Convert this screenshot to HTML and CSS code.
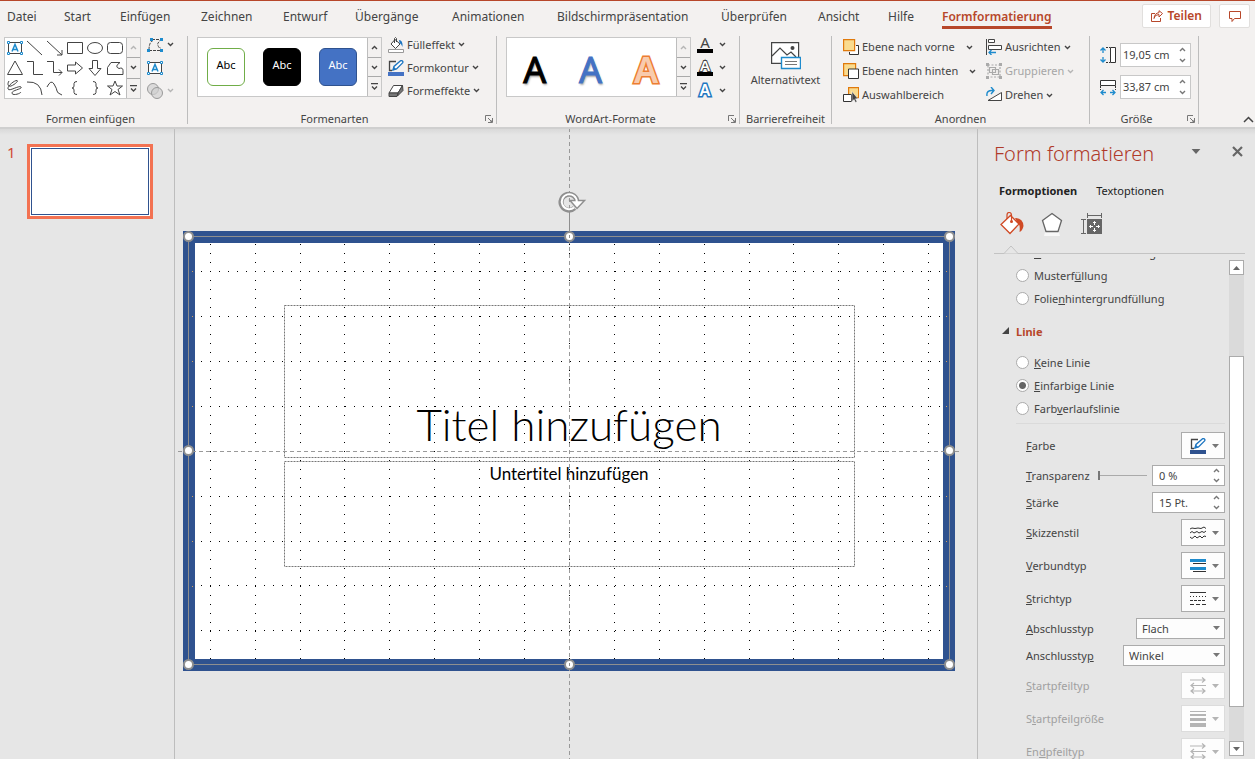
FILE: index.html
```html
<!DOCTYPE html>
<html lang="de">
<head>
<meta charset="utf-8">
<title>Formformatierung</title>
<link rel="stylesheet" href="styles.css">
</head>
<body>
<svg class="defs" aria-hidden="true">
  <symbol id="chev" viewBox="0 0 7 7"><path d="M1 2l2.5 2.5L6 2" fill="none" stroke="currentColor" stroke-width="1.4"/></symbol>
  <symbol id="chev-up" viewBox="0 0 7 7"><path d="M1 5l2.5-2.5L6 5" fill="none" stroke="currentColor" stroke-width="1.4"/></symbol>
  <symbol id="more" viewBox="0 0 7 7"><path d="M0 .5h7M1 3.5L3.500 6 6 3.500" fill="none" stroke="currentColor" stroke-width="1.3"/></symbol>
  <symbol id="tri" viewBox="0 0 7 4"><path d="M0 0h7L3.500 4z" fill="currentColor"/></symbol>
  <symbol id="launch" viewBox="0 0 8 8"><path d="M.5 6V.5H6M3 3l3.500 3.500M7.500 3v4.500H3" fill="none" stroke="#777"/><path d="M7 5v2H5z" fill="#777"/></symbol>
  <symbol id="textbox" viewBox="0 0 16 14"><path d="M1.500 1.500h13v11h-13z" fill="#fff" stroke="#444"/><path d="M5 10.500L8 3.500l3 7M6 8.500h4" fill="none" stroke="#1e8bcd" stroke-width="1.500"/><path d="M.5.5h2v2h-2zM13.500.5h2v2h-2zM.5 11.500h2v2h-2zM13.500 11.500h2v2h-2z" fill="#fff" stroke="#1e8bcd"/></symbol>
  <symbol id="pen" viewBox="0 0 16 16"><path d="M8 1.500H1.500v9H4" fill="none" stroke="#444" stroke-width="1.300"/><path d="M5 10l1-3.500L12.500.8q1-.6 1.900.3t.2 1.800L8.500 9z" fill="#fff" stroke="#1e76c1" stroke-width="1.400"/><path d="M4.500 10.500l1.300-3.700 2.500 2.400z" fill="#1e76c1"/><path d="M0 12h16v4H0z" fill="currentColor"/></symbol>
  <symbol id="arrows" viewBox="0 0 16 17"><path d="M0 3h15M12 .5L15 3l-3 2.500M16 8.500H1M4 6L1 8.500 4 11M1 14h14M4 11.500L1 14l3 2.500M12 11.500l3 2.500-3 2.500" fill="none" stroke="#b5b5b5" stroke-width="1.200"/></symbol>
</svg>
<div class="app">
<header class="ribbon">
  <div class="tabs-row">
    <nav class="tabs">
      <a href="#datei">Datei</a><a href="#start">Start</a><a href="#einfuegen">Einfügen</a><a href="#zeichnen">Zeichnen</a><a href="#entwurf">Entwurf</a><a href="#uebergaenge">Übergänge</a><a href="#animationen">Animationen</a><a href="#praesentation">Bildschirmpräsentation</a><a href="#ueberpruefen">Überprüfen</a><a href="#ansicht">Ansicht</a><a href="#hilfe">Hilfe</a><a class="active" href="#format">Formformatierung</a>
    </nav>
    <div class="share">
      <button class="card-btn"><svg width="12" height="12" viewBox="0 0 12 12" fill="none" stroke="currentColor"><path d="M4 3.500H.5v8h9V8M3 8.500q.5-4 5-4V7l3.500-3.500L8 .7v2Q3.500 3 3 8.500z"/></svg>Teilen</button>
      <button class="card-btn" aria-label="Kommentare"><svg width="12" height="11" viewBox="0 0 12 11" fill="none" stroke="currentColor"><path d="M.5.5h11v7H5.500l-2.500 3v-3H.5z"/></svg></button>
    </div>
  </div>
  <div class="groups">
    <section class="group g-insert">
      <div class="group-body">
        <div class="gallery shapes">
          <div class="shape-grid">
            <svg viewBox="0 0 20 20"><use href="#textbox" x="2" y="3" width="16" height="14"/></svg>
            <svg viewBox="0 0 20 20"><path d="M2 3l15 14"/></svg>
            <svg viewBox="0 0 20 20"><path d="M2 3l15 14M17 12v5h-5"/></svg>
            <svg viewBox="0 0 20 20"><path d="M2.500 4.500h15v11h-15z"/></svg>
            <svg viewBox="0 0 20 20"><ellipse cx="10" cy="10" rx="7.500" ry="5.500"/></svg>
            <svg viewBox="0 0 20 20"><rect x="2.500" y="4.500" width="15" height="11" rx="3"/></svg>
            <svg viewBox="0 0 20 20"><path d="M10 3l7.500 13.500h-15z"/></svg>
            <svg viewBox="0 0 20 20"><path d="M2 3.500h6.500v13H18"/></svg>
            <svg viewBox="0 0 20 20"><path d="M2 3.500h6.500v11H17M14 11.500l3 3-3 3"/></svg>
            <svg viewBox="0 0 20 20"><path d="M2.500 7h8V4l7 6-7 6v-3h-8z"/></svg>
            <svg viewBox="0 0 20 20"><path d="M7.500 2.500h5v8H16l-6 7-6-7h3.500z"/></svg>
            <svg viewBox="0 0 20 20"><path d="M6 4.500h9q-6 4-1 6 4-1.500 4 2v4H2.500v-7z"/></svg>
            <svg viewBox="0 0 20 20"><path d="M4 3C2 6 3 9 6 8s8-5 6-5.500S2 8 3 11s11-4 13-2-9 3-9 6 8 1 9-1"/></svg>
            <svg viewBox="0 0 20 20"><path d="M2 4q14-1 15 13"/></svg>
            <svg viewBox="0 0 20 20"><path d="M2 9q4-8 7-3t3 7 5 4"/></svg>
            <svg viewBox="0 0 20 20"><path d="M12 3.500q-3 0-3 2V8q0 2-2 2 2 0 2 2v2.500q0 2 3 2"/></svg>
            <svg viewBox="0 0 20 20"><path d="M8 3.500q3 0 3 2V8q0 2 2 2-2 0-2 2v2.500q0 2-3 2"/></svg>
            <svg viewBox="0 0 20 20"><path d="M10 3l2 5h5.500l-4.500 3.500 2 5.500-5-3.500L5 17l2-5.500L2.500 8H8z"/></svg>
          </div>
          <div class="scroller"><button disabled aria-label="Nach oben"><svg><use href="#chev-up"/></svg></button><button aria-label="Nach unten"><svg><use href="#chev"/></svg></button><button aria-label="Mehr Formen"><svg><use href="#more"/></svg></button></div>
        </div>
        <div class="stack">
          <button class="cmd" aria-label="Form bearbeiten"><svg width="16" height="14" viewBox="0 0 16 14"><path d="M2 12q0-8 4-9.500M5 1.500h9L11 5q-1 2 1.500 5H14M2 12.500h12" fill="none" stroke="#444" stroke-dasharray="3 1"/><path d="M3 0h3v3H3zM13 0h3v3h-3zM0 11h3v3H0zM13 11h3v3h-3z" fill="#1e8bcd"/></svg><svg class="chev"><use href="#chev"/></svg></button>
          <button class="cmd" aria-label="Textfeld"><svg width="16" height="14"><use href="#textbox"/></svg></button>
          <button class="cmd" disabled aria-label="Formen zusammenführen"><svg width="16" height="16" viewBox="0 0 16 16" fill="#d0d0d0" fill-opacity=".7" stroke="#999"><circle cx="6" cy="6" r="5.500"/><circle cx="10" cy="10" r="5.500"/></svg><svg class="chev"><use href="#chev"/></svg></button>
        </div>
      </div>
      <h2>Formen einfügen</h2>
    </section>
    <section class="group g-styles">
      <div class="group-body">
        <div class="gallery">
          <div class="swatches"><button class="swatch s1">Abc</button><button class="swatch s2">Abc</button><button class="swatch s3">Abc</button></div>
          <div class="scroller"><button aria-label="Nach oben"><svg><use href="#chev-up"/></svg></button><button aria-label="Nach unten"><svg><use href="#chev"/></svg></button><button aria-label="Mehr Formenarten"><svg><use href="#more"/></svg></button></div>
        </div>
        <div class="stack">
          <button class="cmd"><svg width="16" height="16" viewBox="0 0 16 16"><path d="M7 2.500l5 4.500-4.500 4.500L3 7zM6.500 6V1.500Q7.500-.5 8.500 1.500V5" fill="#fff" stroke="#444"/><path d="M11 3q4 0 3.500 7-1-3-3-4z" fill="#1e76c1"/><path d="M.5 12.500h15v3H.5z" fill="#fff" stroke="#999"/></svg>Fülleffekt<svg class="chev"><use href="#chev"/></svg></button>
          <button class="cmd"><svg class="kontur" width="16" height="16"><use href="#pen"/></svg>Formkontur<svg class="chev"><use href="#chev"/></svg></button>
          <button class="cmd"><svg width="16" height="14" viewBox="0 0 16 14"><path d="M5.500 1.500h9L10 9H1z" fill="#fff" stroke="#444"/><path d="M1 9h9l-1 3.500H1zM10 9l4.500-7.500.5 5L9.500 12z" fill="#777" stroke="#444"/></svg>Formeffekte<svg class="chev"><use href="#chev"/></svg></button>
        </div>
      </div>
      <h2>Formenarten</h2><button class="launcher" aria-label="Formenarten Optionen"><svg><use href="#launch"/></svg></button>
    </section>
    <section class="group g-wordart">
      <div class="group-body">
        <div class="gallery">
          <div class="wordarts"><button class="wa w1">A</button><button class="wa w2">A</button><button class="wa w3">A</button></div>
          <div class="scroller"><button disabled aria-label="Nach oben"><svg><use href="#chev-up"/></svg></button><button aria-label="Nach unten"><svg><use href="#chev"/></svg></button><button aria-label="Mehr WordArt"><svg><use href="#more"/></svg></button></div>
        </div>
        <div class="stack letters">
          <button class="cmd"><span class="letter">A</span><svg class="chev"><use href="#chev"/></svg></button>
          <button class="cmd"><span class="letter outline">A</span><svg class="chev"><use href="#chev"/></svg></button>
          <button class="cmd"><span class="letter glow">A</span><svg class="chev"><use href="#chev"/></svg></button>
        </div>
      </div>
      <h2>WordArt-Formate</h2><button class="launcher" aria-label="WordArt Optionen"><svg><use href="#launch"/></svg></button>
    </section>
    <section class="group g-alt">
      <div class="group-body">
        <button class="big"><svg width="30" height="28" viewBox="0 0 30 28" fill="none"><path d="M.6.6h27v20.800H.6z" fill="#fff" stroke="#444" stroke-width="1.200"/><path d="M1 14l8-8 7 7 4-3 5 5" stroke="#444" stroke-width="1.200"/><circle cx="21.500" cy="6" r="2" fill="#444"/><path d="M10.500 15.500h19v11h-19z" fill="#fff" stroke="#1e8bcd" stroke-width="1.400"/><path d="M14 19.500h12M14 22.500h12" stroke="#777"/></svg>Alternativtext</button>
      </div>
      <h2>Barrierefreiheit</h2>
    </section>
    <section class="group g-arrange">
      <div class="group-body">
        <div class="stack first">
          <button class="cmd"><svg width="16" height="16" viewBox="0 0 16 16"><path d="M6.500 13v2.500h9v-9H13" fill="#fff" stroke="#333"/><path d="M.6.6h11v11H.6z" fill="#fadb8e" stroke="#e07a0c" stroke-width="1.200"/></svg>Ebene nach vorne<svg class="chev push"><use href="#chev"/></svg></button>
          <button class="cmd"><svg width="16" height="16" viewBox="0 0 16 16"><path d="M.6.6h12v12H.6z" fill="#fadb8e" stroke="#e07a0c" stroke-width="1.200"/><path d="M5.500 6h10v9.500h-10z" fill="#fff" stroke="#333"/></svg>Ebene nach hinten<svg class="chev push"><use href="#chev"/></svg></button>
          <button class="cmd"><svg width="16" height="16" viewBox="0 0 16 16"><path d="M5.600.6h10v10h-10z" fill="#fadb8e" stroke="#e07a0c" stroke-width="1.200"/><path d="M.5 7.500h8v7h-8z" fill="#fff" stroke="#333"/><path d="M9 4.500v10l2-2 1.500 3 1.500-.7-1.500-3H15z" fill="#444" stroke="#fff" stroke-width=".5"/></svg>Auswahlbereich</button>
        </div>
        <div class="stack">
          <button class="cmd"><svg width="16" height="16" viewBox="0 0 16 16" fill="none" stroke="#444"><path d="M.5 0v16M2.500.5h6v3h-6zM2.500 6.500h13v4h-13z" fill="#fff"/><path d="M10 13.500H3M5.500 11L3 13.500 5.500 16" stroke="#1e8bcd" stroke-width="1.300"/></svg>Ausrichten<svg class="chev"><use href="#chev"/></svg></button>
          <button class="cmd" disabled><svg width="16" height="16" viewBox="0 0 16 16" fill="none" stroke="#aaa" stroke-width="1.200"><path d="M2 2h12v12H2z" stroke-dasharray="2 1.500"/><path d="M3.500 4.500h6v5h-6zM6.500 6.500h6v5h-6z"/><path d="M0 0h3v3H0zM13 0h3v3h-3zM0 13h3v3H0zM13 13h3v3h-3z" fill="#aaa" stroke="none"/></svg>Gruppieren<svg class="chev"><use href="#chev"/></svg></button>
          <button class="cmd"><svg width="16" height="16" viewBox="0 0 16 16" fill="none" stroke="#444"><path d="M15.500 5.500v8H2z" fill="#fff"/><path d="M1 9Q0 3 7 3.500M5 0l3 3.500L5 7" stroke="#1e8bcd" stroke-width="1.400"/></svg>Drehen<svg class="chev"><use href="#chev"/></svg></button>
        </div>
      </div>
      <h2>Anordnen</h2>
    </section>
    <section class="group g-size">
      <div class="group-body sizes">
        <div class="size-row"><svg width="17" height="17" viewBox="0 0 17 17" fill="none" stroke="#333"><path d="M10.500.5h5v15h-5z" fill="#fff"/><path d="M6 .5h4M6 15.500h4" stroke-dasharray="2 1"/><path d="M3 1v5M3 10v5M.5 3.500L3 1l2.500 2.500M.5 12.500L3 15l2.500-2.500" stroke="#1e8bcd" stroke-width="1.300"/></svg><span class="spin"><input aria-label="Höhe" value="19,05 cm"><span class="spin-btns"><button aria-label="Mehr"><svg><use href="#chev-up"/></svg></button><button aria-label="Weniger"><svg><use href="#chev"/></svg></button></span></span></div>
        <div class="size-row"><svg width="17" height="17" viewBox="0 0 17 17" fill="none" stroke="#333"><path d="M.5 1.500h15v5H.5z" fill="#fff"/><path d="M.5 7v4M15.500 7v4" stroke-dasharray="2 1"/><path d="M1 13.500h5M10 13.500h5M3.500 11L1 13.500 3.500 16M12.500 11l2.500 2.500-2.500 2.500" stroke="#1e8bcd" stroke-width="1.300"/></svg><span class="spin"><input aria-label="Breite" value="33,87 cm"><span class="spin-btns"><button aria-label="Mehr"><svg><use href="#chev-up"/></svg></button><button aria-label="Weniger"><svg><use href="#chev"/></svg></button></span></span></div>
      </div>
      <h2>Größe</h2><button class="launcher" aria-label="Größe Optionen"><svg><use href="#launch"/></svg></button>
    </section>
    <button class="collapse" aria-label="Menüband reduzieren"><svg width="11" height="7" viewBox="0 0 11 7"><path d="M1 6l4.500-4.500L10 6" fill="none" stroke="#444" stroke-width="1.500"/></svg></button>
  </div>
</header>
<main class="workspace">
  <aside class="thumbs"><span class="num">1</span><button class="thumb" aria-label="Folie 1"><span></span></button></aside>
  <section class="canvas">
    <div class="slide">
      <div class="ph title">Titel hinzufügen</div>
      <div class="ph subtitle">Untertitel hinzufügen</div>
      <svg class="overlay" viewBox="0 0 772 440" fill="none">
        <g stroke="#000" stroke-dasharray="1 8">
          <path d="M27.500 13v415M72.500 13v415M117.500 13v415M161.500 13v415M206.500 13v415M251.500 13v415M296.500 13v415M341.500 13v415M386.500 13v415M431.500 13v415M476.500 13v415M521.500 13v415M566.500 13v415M610.500 13v415M655.500 13v415M700.500 13v415M745.500 13v415"/>
          <path d="M18 40.500h742M18 85.500h742M18 130.500h742M18 175.500h742M18 265.500h742M18 310.500h742M18 354.500h742M18 399.500h742"/>
        </g>
        <path d="M9.500 40v360M763.500 40v360" stroke="#d0a060" stroke-dasharray="1 44"/>
        <path d="M101.500 74.500h570v152h-570zM101.500 230.500h570v105h-570z" stroke="#777" stroke-dasharray="2 1"/>
        <path d="M386.500-103v631M-5 220.500h782" stroke="#999" stroke-dasharray="4 3"/>
        <path d="M5.500 5.500h761v428h-761zM386.500 5V-20" stroke="#8f8f8f"/>
        <g fill="#fff" stroke="#8f8f8f" stroke-width="2"><circle cx="5.500" cy="5.500" r="4.500"/><circle cx="386.500" cy="5.500" r="4.500"/><circle cx="766.500" cy="5.500" r="4.500"/><circle cx="5.500" cy="219.500" r="4.500"/><circle cx="766.500" cy="219.500" r="4.500"/><circle cx="5.500" cy="433.500" r="4.500"/><circle cx="386.500" cy="433.500" r="4.500"/><circle cx="766.500" cy="433.500" r="4.500"/></g>
        <path d="M386.500 4v3M386.500 432v3" stroke="#8f8f8f"/>
        <path d="M391.500-23a8 8 0 1 1 2.500-6" stroke="#8f8f8f" stroke-width="5"/>
        <path d="M387-30.500h14.500l-7.500 8z" fill="#fff" stroke="#8f8f8f" stroke-width="1.500"/>
        <path d="M391-23.500a7.500 7.500 0 1 1 2.800-6v2" stroke="#fff" stroke-width="2"/>
      </svg>
    </div>
  </section>
  <aside class="panel">
    <div class="panel-head"><h1>Form formatieren</h1><button aria-label="Aufgabenbereich-Optionen"><svg width="10" height="5"><use href="#tri"/></svg></button><button aria-label="Schließen"><svg width="11" height="11" viewBox="0 0 11 11"><path d="M1 1l9 9M10 1l-9 9" stroke="#666" stroke-width="2.200"/></svg></button></div>
    <div class="panel-tabs"><button class="on">Formoptionen</button><button>Textoptionen</button></div>
    <div class="panel-icons">
      <button aria-label="Füllung und Linie"><svg width="24" height="24" viewBox="0 0 24 24" fill="none"><path d="M15 6q8 0 8.500 8-1 5-4 6 1-8-2-9z" fill="#d04a25"/><path d="M10.500 3.500L19 12l-9 9.500L1 12.500z" fill="#fff" stroke="#d04a25" stroke-width="1.300"/><path d="M7 7V3q0-2.500 2.200-2.500T11.500 3v6" stroke="#d04a25" stroke-width="1.200"/><circle cx="11.500" cy="9.500" r="1.500" fill="#d04a25"/></svg></button>
      <button aria-label="Effekte"><svg width="22" height="24" viewBox="0 0 22 24"><path d="M4 20h14l1 4H3z" fill="#f8f8f8"/><path d="M11 1.500l9.500 7L17 19.500H5L1.500 8.500z" fill="#fff" stroke="#666" stroke-width="1.300"/></svg></button>
      <button aria-label="Größe und Eigenschaften"><svg width="22" height="23" viewBox="0 0 22 23" fill="none" stroke="#666"><path d="M7 3.500h14M7.500 1v5M21.500 1v5M3.500 7v14M1 7.500h5M1 21.500h5"/><path d="M7 7h15v15H7z" fill="#666" stroke="none"/><path d="M14.500 9.500v3.500M14.500 16v3.500M9.500 14.500H13M16 14.500h3.500M13 11l1.500-1.500L16 11M13 18l1.500 1.500L16 18M11 13l-1.500 1.500L11 16M18 13l1.500 1.500L18 16" stroke="#fff"/></svg></button>
    </div>
    <div class="rule"><svg width="16" height="10" viewBox="0 0 16 10"><path d="M1 9.500L8 2l7 7.500" fill="#e6e6e6" stroke="#c3c3c3"/></svg></div>
    <div class="panel-scroll">
      <div class="content">
        <label class="radio clipped"><input type="radio" name="fill"><span><u>B</u>ild- oder Texturfüllung</span></label>
        <label class="radio"><input type="radio" name="fill"><span>Musterf<u>ü</u>llung</span></label>
        <label class="radio"><input type="radio" name="fill"><span>Folie<u>n</u>hintergrundfüllung</span></label>
        <h3><svg width="7" height="7" viewBox="0 0 7 7"><path d="M7 0v7H0z" fill="#444"/></svg>Linie</h3>
        <label class="radio"><input type="radio" name="line"><span><u>K</u>eine Linie</span></label>
        <label class="radio"><input type="radio" name="line" checked><span><u>E</u>infarbige Linie</span></label>
        <label class="radio"><input type="radio" name="line"><span>Farb<u>v</u>erlaufslinie</span></label>
        <div class="props">
          <div class="prop"><label for="farbe"><u>F</u>arbe</label><button id="farbe" class="pick"><svg class="dark" width="16" height="16"><use href="#pen"/></svg><svg class="tri"><use href="#tri"/></svg></button></div>
          <div class="prop small"><label for="transp"><u>T</u>ransparenz</label><input class="slider" type="range" value="0" aria-label="Transparenz Regler"><span class="spin"><input id="transp" value="0 %"><span class="spin-btns"><button aria-label="Mehr"><svg><use href="#chev-up"/></svg></button><button aria-label="Weniger"><svg><use href="#chev"/></svg></button></span></span></div>
          <div class="prop small"><label for="staerke"><u>S</u>tärke</label><span class="spin"><input id="staerke" value="15 Pt."><span class="spin-btns"><button aria-label="Mehr"><svg><use href="#chev-up"/></svg></button><button aria-label="Weniger"><svg><use href="#chev"/></svg></button></span></span></div>
          <div class="prop"><label for="skizze"><u>S</u>kizzenstil</label><button id="skizze" class="pick"><svg width="16" height="14" viewBox="0 0 16 14" fill="none" stroke="#333"><path d="M0 3l2-1 3 .5L8 2l3 .5L14 1l2 1.500M0 7l2-1.500L4 7l3-1.500L9 7l3-1.500L14 6.500l2-1.500M0 11l2 1.500L5 10l2 2 3-2 2 2 2-2 2 .5"/></svg><svg class="tri"><use href="#tri"/></svg></button></div>
          <div class="prop"><label for="verbund"><u>V</u>erbundtyp</label><button id="verbund" class="pick"><svg width="16" height="14" viewBox="0 0 16 14"><path d="M0 0h16v3H0zM0 8h16v3H0z" fill="#1e8bcd"/><path d="M3 4.500h13M3 12.500h13" stroke="#333"/></svg><svg class="tri"><use href="#tri"/></svg></button></div>
          <div class="prop"><label for="strich"><u>S</u>trichtyp</label><button id="strich" class="pick"><svg width="16" height="14" viewBox="0 0 16 14" stroke="#333"><path d="M0 .5h16"/><path d="M0 4.500h16" stroke-dasharray="1 2"/><path d="M0 8.500h16" stroke-dasharray="3 1"/><path d="M0 12.500h16" stroke-dasharray="4 2"/></svg><svg class="tri"><use href="#tri"/></svg></button></div>
          <div class="prop small"><label for="abschluss"><u>A</u>bschlusstyp</label><span class="select"><select id="abschluss"><option>Flach</option></select><svg class="tri"><use href="#tri"/></svg></span></div>
          <div class="prop small"><label for="anschluss">Anschlussty<u>p</u></label><span class="select wide"><select id="anschluss"><option>Winkel</option></select><svg class="tri"><use href="#tri"/></svg></span></div>
          <div class="prop off"><label for="startpfeil"><u>S</u>tartpfeiltyp</label><button id="startpfeil" class="pick" disabled><svg width="16" height="17"><use href="#arrows"/></svg><svg class="tri"><use href="#tri"/></svg></button></div>
          <div class="prop off"><label for="startgroesse">S<u>t</u>artpfeilgröße</label><button id="startgroesse" class="pick" disabled><svg width="16" height="16" viewBox="0 0 16 16" fill="#b5b5b5"><path d="M0 0h16v1H0zM0 3h16v2H0zM0 7h16v3H0zM0 12h16v4H0z"/></svg><svg class="tri"><use href="#tri"/></svg></button></div>
          <div class="prop off"><label for="endpfeil">En<u>d</u>pfeiltyp</label><button id="endpfeil" class="pick" disabled><svg width="16" height="17"><use href="#arrows"/></svg><svg class="tri"><use href="#tri"/></svg></button></div>
        </div>
      </div>
      <div class="vbar"><button aria-label="Nach oben blättern"><svg class="flip"><use href="#tri"/></svg></button><div class="track"><div class="grip"></div></div><button aria-label="Nach unten blättern"><svg><use href="#tri"/></svg></button></div>
    </div>
  </aside>
</main>
</div>
</body>
</html>
```
FILE: styles.css
```css
* { box-sizing: border-box; }
body { margin: 0; font: 11px/16px "Noto Sans", "Open Sans", sans-serif; color: #444; background: #e6e6e6; }
button, input, select { font: inherit; color: inherit; margin: 0; }
button { border: 0; padding: 0; background: none; }
svg { display: block; flex: none; }
h1, h2, h3 { margin: 0; font-weight: 400; font-size: 11px; }
.defs { position: absolute; width: 0; height: 0; }
.app { display: flex; flex-direction: column; height: 100vh; overflow: hidden; }

.ribbon { background: #f3f1f0; border-top: 1px solid #b7472a; border-bottom: 2px solid #cfcfcf; height: 129px; flex: none; }
.tabs-row { display: flex; justify-content: space-between; height: 33px; padding: 3px 5px 0 7px; }
.tabs { display: grid; grid-template-columns: 57px 56px 81px 82px 72px 97px 105px 164px 97px 70px 54px auto; font-size: 12px; }
.tabs a { color: #444; text-decoration: none; line-height: 26px; white-space: nowrap; }
.tabs .active { color: #b7472a; font-weight: 600; border-bottom: 3px solid #b7472a; height: 25px; }
.share { display: flex; gap: 8px; }
.card-btn { display: flex; align-items: center; justify-content: center; gap: 5px; height: 24px; min-width: 31px; padding: 0 8px; background: #fff; border: 1px solid #e1dfdd; border-radius: 2px; color: #b7472a; font-size: 12px; font-weight: 600; }

.groups { display: flex; height: 93px; padding-top: 2px; }
.group { position: relative; display: flex; flex-direction: column; justify-content: space-between; height: 88px; border-right: 1px solid #bdbdbd; }
.group h2 { text-align: center; line-height: 16px; margin-bottom: -3px; }
.group-body { display: flex; }
.g-insert { width: 188px; padding-left: 4px; }
.g-insert h2 { padding-right: 10px; }
.g-styles { width: 309px; padding-left: 9px; }
.g-wordart { width: 243px; padding-left: 9px; }
.g-styles h2, .g-wordart h2 { padding-right: 24px; }
.g-alt { width: 92px; }
.g-arrange { width: 258px; padding-left: 11px; }
.g-arrange h2 { padding-right: 11px; }
.g-size { width: 109px; padding-left: 10px; }
.g-size h2 { padding-right: 25px; }
.launcher { position: absolute; right: 3px; bottom: 1px; }
.launcher svg { width: 8px; height: 8px; }
.collapse { margin-left: auto; align-self: flex-end; padding: 0 1px 4px 0; }

.gallery { display: flex; margin-top: 1px; height: 60px; border: 1px solid #c8c8c8; background: #fff; }
.shapes { height: 62px; }
.shape-grid { display: grid; grid-template-columns: repeat(6, 20px); grid-auto-rows: 20px; padding-right: 1px; }
.shape-grid > svg { width: 20px; height: 20px; fill: none; stroke: #444; }
.scroller { display: flex; flex-direction: column; width: 14px; background: #f3f1f0; border-left: 1px solid #bdbdbd; }
.scroller button { flex: 1; display: grid; place-items: center; border-bottom: 1px solid #aaa; }
.scroller button:last-child { border-bottom: 0; }
.scroller svg, .chev { width: 7px; height: 7px; color: #444; }
button:disabled { color: #a6a6a6; }
button:disabled .chev, .scroller button:disabled svg { color: #b5b5b5; }
.stack { display: flex; flex-direction: column; padding-left: 6px; }
.cmd { display: flex; align-items: center; gap: 4px; height: 23px; white-space: nowrap; }
.g-insert .stack, .g-styles .stack { margin-top: -3px; }
.g-styles .cmd { gap: 3px; }
.kontur { color: #4472c4; }
.dark { color: #2f528f; }
.swatches { display: flex; align-items: center; gap: 18px; padding: 0 10px 0 9px; }
.swatch { width: 38px; height: 38px; border: 1px solid; border-radius: 6px; padding-bottom: 4px; }
.s1 { border-color: #70ad47; color: #000; background: #fff; }
.s2 { border-color: #000; color: #fff; background: #000; }
.s3 { border-color: #2f528f; color: #fff; background: #4472c4; }
.wordarts { display: flex; width: 169px; padding: 6px 2px 0 0; justify-content: space-around; }
.wa { width: 40px; font: 36px/52px "Noto Sans", sans-serif; text-shadow: 1px 2px 2px #aaa; }
.w1 { color: #000; -webkit-text-stroke: 1px #000; }
.w2 { color: #4472c4; -webkit-text-stroke: 1px #4472c4; }
.w3 { color: #f8cbad; font-weight: 600; -webkit-text-stroke: 3px #ed7d31; paint-order: stroke fill; text-shadow: none; }
.letters { margin-top: -3px; }
.letters .cmd { gap: 6px; }
.letter { width: 16px; height: 17px; font-size: 15px; line-height: 13px; text-align: center; border-bottom: 4px solid #000; }
.outline { color: #fff; -webkit-text-stroke: 2px #444; paint-order: stroke fill; font-weight: 600; }
.glow { color: #fff; font-size: 16px; font-weight: 600; border: 0; line-height: 17px; -webkit-text-stroke: 3px #1e76c1; paint-order: stroke fill; }
.big { display: flex; flex-direction: column; align-items: center; gap: 2px; width: 100%; padding-top: 6px; }
.g-arrange .cmd { height: 24px; gap: 3px; }
.g-arrange .stack { padding-left: 0; margin-top: -1px; }
.g-arrange .first { width: 143px; }
.push { margin-left: 8px; }
.sizes { flex-direction: column; gap: 8px; padding-top: 7px; }
.size-row { display: flex; align-items: center; gap: 3px; }
.spin { display: flex; width: 71px; height: 24px; background: #fff; border: 1px solid #ababab; }
.sizes .spin { border-color: #c8c8c8; }
.spin input { flex: 1; min-width: 0; border: 0; padding: 0 0 0 2px; background: none; }
.spin-btns { display: flex; flex-direction: column; justify-content: space-around; width: 16px; }
.spin-btns svg { width: 7px; height: 7px; margin: auto; color: #777; }

.workspace { display: flex; flex: 1; min-height: 0; background: linear-gradient(#d9d9d9, #e6e6e6 6px); }
.thumbs { display: flex; align-items: flex-start; gap: 12px; width: 175px; flex: none; padding: 15px 0 0 7px; border-right: 1px solid #bdbdbd; }
.num { color: #d04a35; font-size: 15px; width: 8px; }
.thumb { width: 126px; height: 75px; padding: 1px; border: 3px solid #f37252; background: #fff; }
.thumb span { display: block; height: 100%; border: 1px solid #2f528f; }
.canvas { flex: 1; min-width: 0; display: flex; justify-content: center; align-items: flex-start; padding: 102px 14px 0 0; overflow: hidden; }
.slide { position: relative; flex: none; width: 772px; height: 440px; padding: 62px 89px; background: #fff; border: 12px solid #2f528f; color: #000; font-family: Lato, sans-serif; font-variant-ligatures: none; text-align: center; }
.title { height: 153px; padding-top: 91px; font-size: 44px; line-height: 56px; font-weight: 300; }
.subtitle { margin-top: 3px; padding-top: 1px; font-size: 17px; line-height: 24px; }
.overlay { position: absolute; left: -12px; top: -12px; width: 772px; height: 440px; overflow: visible; }

.panel { display: flex; flex-direction: column; width: 278px; flex: none; border-left: 1px solid #bdbdbd; padding: 10px 10px 0 16px; }
.panel button { display: flex; align-items: center; justify-content: center; }
.panel-head { display: flex; align-items: center; height: 30px; gap: 31px; padding-right: 2px; color: #666; }
.panel-head button { margin-bottom: 6px; }
.panel-head h1 { flex: 1; color: #b03a2a; font-size: 20px; line-height: 30px; font-weight: 300; white-space: nowrap; }
.panel-tabs { display: flex; gap: 19px; padding: 14px 0 0 5px; color: #222; }
.panel-tabs .on { font-weight: 700; }
.panel-icons { display: flex; gap: 17px; padding: 13px 0 0 6px; height: 45px; align-items: flex-start; }
.rule { height: 10px; padding-left: 9px; border-bottom: 1px solid #c3c3c3; }
.rule svg { height: 10px; }
.panel-scroll { display: flex; flex: 1; min-height: 0; margin-top: 3px; }
.content { flex: 1; overflow: hidden; padding-left: 22px; }
.radio { display: flex; align-items: center; gap: 5px; height: 23px; }
.clipped { margin-top: -16px; }
.radio input { appearance: none; width: 13px; height: 13px; border: 1px solid #ababab; border-radius: 50%; background: #fff; }
.radio input:checked { background: radial-gradient(circle, #666 3px, #fff 4px); }
.clipped input { visibility: hidden; }
h3 { display: flex; align-items: center; gap: 7px; height: 22px; margin: 11px 0 8px -14px; color: #b7472a; font-weight: 700; }
h3 svg { margin-top: -4px; }
.props { display: flex; flex-direction: column; gap: 6px; margin-top: 3px; padding: 8px 0 0 10px; border-top: 1px solid #dadada; margin-right: 4px; }
.prop { display: flex; align-items: center; height: 27px; flex: none; }
.small { height: 21px; }
.prop label { margin-right: auto; white-space: nowrap; }
.pick { width: 44px; height: 27px; background: #fdfdfd; border: 1px solid #ababab; gap: 6px; }
.panel .pick { justify-content: flex-end; padding-right: 5px; }
.tri { width: 7px; height: 4px; color: #777; }
.off { color: #a0a0a0; }
.off .pick { border-color: #dcdcdc; }
.off .tri { color: #b5b5b5; }
.prop .spin { width: 73px; height: 21px; }
.prop .spin input { padding-left: 6px; }
.slider { appearance: none; width: 49px; height: 12px; margin-right: 5px; background: linear-gradient(#aaa, #aaa) center / 100% 1px no-repeat; }
.slider::-webkit-slider-thumb { appearance: none; width: 2px; height: 9px; background: #777; }
.select { position: relative; width: 89px; }
.wide { width: 102px; }
.select select { appearance: none; width: 100%; height: 21px; padding: 0 5px; border: 1px solid #ababab; border-radius: 0; background: #fdfdfd; }
.select .tri { position: absolute; right: 5px; top: 8px; pointer-events: none; }
.vbar { display: flex; flex-direction: column; width: 15px; margin: 3px 1px 3px 0; background: #dadada; }
.vbar button { height: 15px; background: #fff; border: 1px solid #ababab; color: #666; }
.vbar svg { width: 7px; height: 4px; }
.flip { transform: rotate(180deg); }
.track { flex: 1; padding-top: 81px; }
.grip { height: 351px; background: #fff; border: 1px solid #ababab; }
```
